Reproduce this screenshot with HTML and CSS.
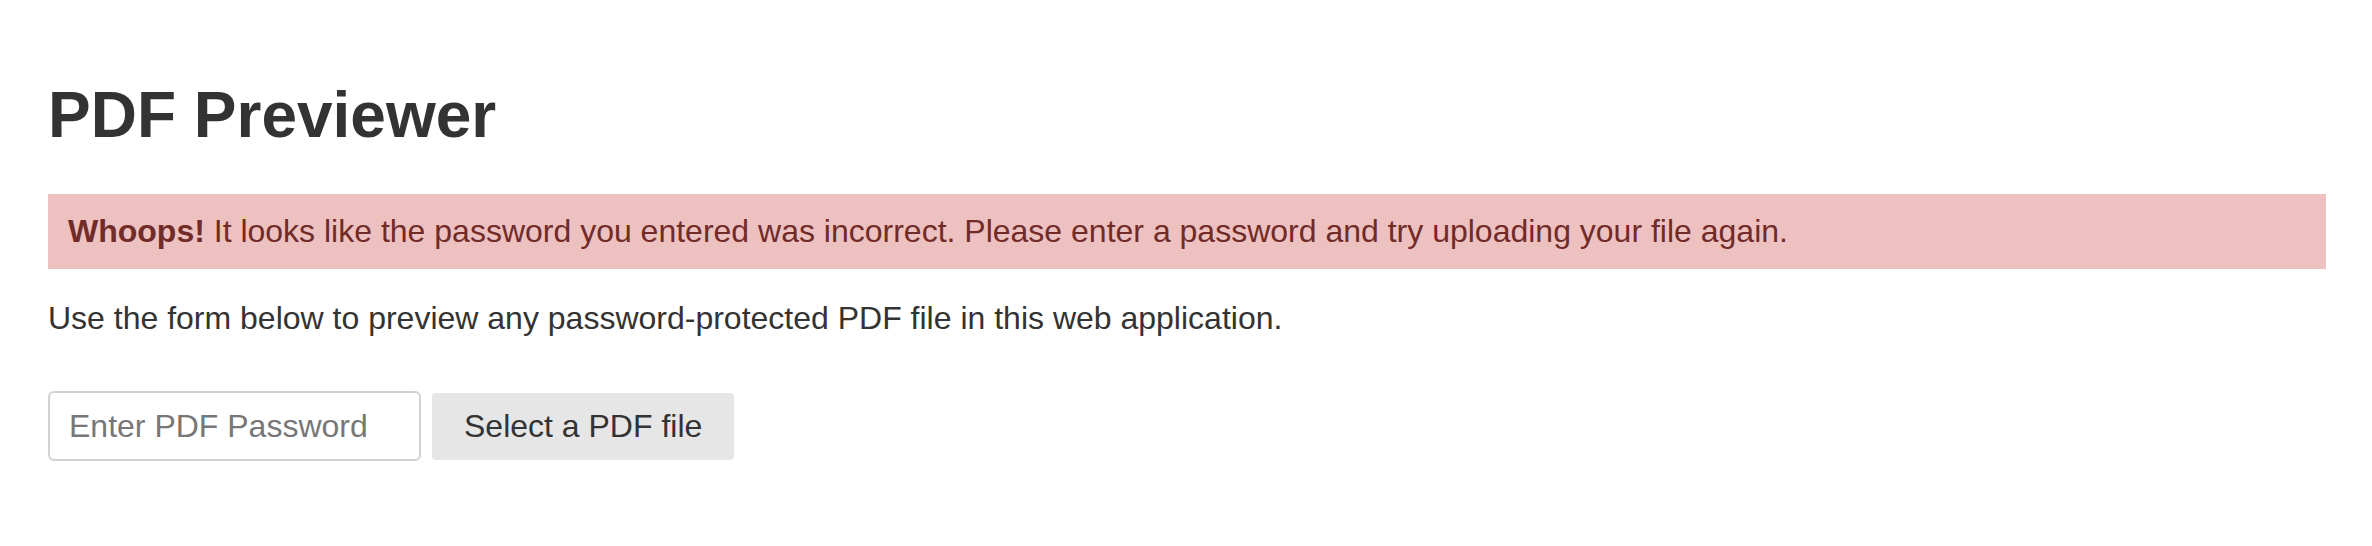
FILE: index.html
```html
<!DOCTYPE html>
<html lang="en">
<head>
<meta charset="utf-8">
<title>PDF Previewer</title>
<link rel="stylesheet" href="styles.css">
</head>
<body>
<main class="page">
  <h1 class="title">PDF Previewer</h1>
  <div class="alert"><strong>Whoops!</strong> It looks like the password you entered was incorrect. Please enter a password and try uploading your file again.</div>
  <p class="intro">Use the form below to preview any password-protected PDF file in this web application.</p>
  <form class="upload-form">
    <input class="password-input" type="password" placeholder="Enter PDF Password">
    <button class="file-button" type="button">Select a PDF file</button>
  </form>
</main>
</body>
</html>
```

FILE: styles.css
```css
html, body {
  margin: 0;
  padding: 0;
  background: #ffffff;
}

body {
  font-family: "Liberation Sans", Arial, Helvetica, sans-serif;
  color: #333333;
}

.page {
  padding: 0 46px 0 48px;
}

.title {
  margin: 80px 0 44px;
  font-size: 64px;
  line-height: 70px;
  font-weight: 700;
  color: #333333;
}

.alert {
  padding: 15px 20px;
  font-size: 32px;
  line-height: 45px;
  background: #eec1c1;
  color: #712b28;
}

.alert strong {
  font-weight: 700;
}

.intro {
  margin: 27px 0 50px;
  font-size: 32px;
  line-height: 45px;
  color: #333333;
}

.upload-form {
  display: flex;
  align-items: center;
  gap: 11px;
  margin: 0;
}

.password-input {
  box-sizing: border-box;
  width: 373px;
  height: 70px;
  margin: 0;
  padding: 0 19px;
  border: 2px solid #d2d2d2;
  border-radius: 6px;
  font-family: inherit;
  font-size: 32px;
  color: #333333;
  background: #ffffff;
  outline: none;
}

.password-input::placeholder {
  color: #777777;
  opacity: 1;
}

.file-button {
  box-sizing: border-box;
  height: 67px;
  margin: 0;
  padding: 0 32px;
  border: none;
  border-radius: 4px;
  background: #e6e6e6;
  font-family: inherit;
  font-size: 32px;
  color: #333333;
  cursor: pointer;
}
```
